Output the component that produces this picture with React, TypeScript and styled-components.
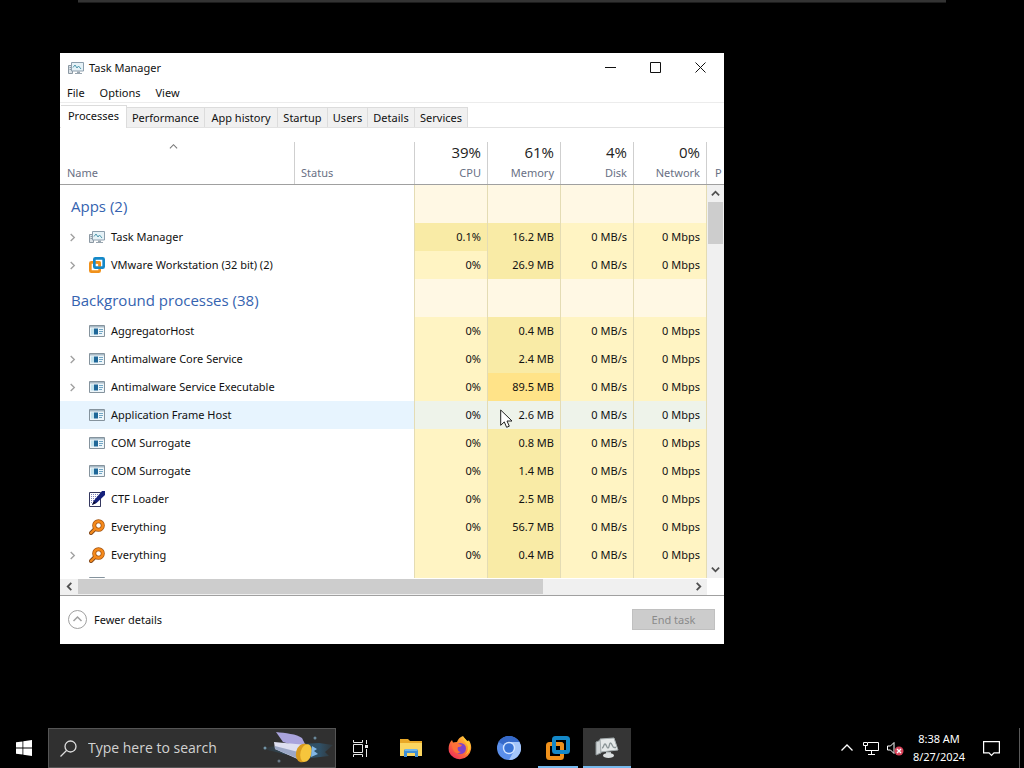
import React from "react";
import styled, { createGlobalStyle, css } from "styled-components";

const displayFont = `"Open Sans", "Noto Sans", sans-serif`;

const GlobalStyle = createGlobalStyle`
  * { box-sizing: border-box; }
  body {
    margin: 0;
    background: #000;
    color: #111;
    font-family: "Noto Sans", "Open Sans", sans-serif;
    font-size: 11px;
    line-height: 16px;
  }
  button, input { font: inherit; color: inherit; }
  button { background: none; border: 0; padding: 0; }
  svg { display: block; flex: none; }
`;

const Desktop = styled.div`
  display: flex;
  flex-direction: column;
  height: 100vh;
  min-height: 480px;
  overflow: hidden;
`;

const SessionHandle = styled.div`
  height: 3px;
  margin: 0 78px;
  background: #333;
  border-bottom: 1px solid #1c1c1c;
`;

const Workspace = styled.main`
  display: flex;
  flex: 1;
  min-height: 0;
  padding: 50px 300px 84px 60px;
`;

const AppWindow = styled.section`
  display: flex;
  flex: 1;
  flex-direction: column;
  min-width: 0;
  background: #fff;
`;

const TitleBar = styled.header`
  display: flex;
  align-items: center;
  height: 29px;
  padding: 0 1px 0 8px;
`;

const Title = styled.h1`
  flex: 1;
  margin: 0 0 0 5px;
  font-size: 11px;
  font-weight: 400;
`;

const CaptionButton = styled.button`
  display: grid;
  place-items: center;
  width: 45px;
  height: 29px;
`;

const MenuBar = styled.nav`
  display: flex;
  gap: 15px;
  height: 21px;
  padding: 3px 7px 0;
  border-bottom: 1px solid #ececec;
`;

const MenuButton = styled.button`
  height: 16px;
`;

const TabStrip = styled.div`
  display: flex;
  align-items: flex-end;
  height: 25px;
  padding-left: 1px;
  border-bottom: 1px solid #e2e2e2;
`;

const Tab = styled.button<{ $width: number; $active?: boolean }>`
  width: ${(p) => p.$width}px;
  height: 20px;
  background: #f0f0f0;
  border: 1px solid #dcdcdc;
  border-width: 1px 1px 0 0;
  white-space: nowrap;
  ${(p) =>
    p.$active &&
    css`
      height: 23px;
      padding-bottom: 2px;
      margin-bottom: -1px;
      background: #fff;
    `}
`;

const ListArea = styled.div`
  position: relative;
  flex: 1;
  min-height: 0;
  overflow: hidden;
`;

const ProcessTable = styled.table`
  width: 100%;
  table-layout: fixed;
  border-collapse: separate;
  border-spacing: 0;
`;

const HeadCell = styled.th<{ $width?: number; $align?: "right" }>`
  width: ${(p) => (p.$width ? `${p.$width}px` : "auto")};
  height: 57px;
  padding: 14px 0 0;
  border-bottom: 1px solid #a0a0a0;
  color: #697084;
  font-weight: 400;
  text-align: ${(p) => p.$align || "left"};
  vertical-align: top;
`;

const HeadContent = styled.div<{ $divider?: boolean; $edge?: boolean }>`
  display: flex;
  flex-direction: column;
  justify-content: flex-end;
  height: 42px;
  padding: ${(p) => (p.$edge ? "0 0 3px 8px" : "0 6px 3px")};
  border-left: 1px solid ${(p) => (p.$divider ? "#cfcfcf" : "transparent")};
  white-space: nowrap;
`;

const SortMark = styled.span`
  display: flex;
  justify-content: center;
  height: 23px;
  margin-right: 8px;
`;

const Usage = styled.span`
  margin-bottom: 3px;
  color: #222;
  font-family: ${displayFont};
  font-size: 15px;
  line-height: 20px;
`;

const heat = {
  group: "#fff8e4",
  low: "#fff4c3",
  mid: "#f9eba6",
  high: "#ffe388",
  hover: "#eef3ea",
};
type Heat = keyof typeof heat;

const GroupTitle = styled.th`
  height: 38px;
  padding: 3px 0 0 11px;
  color: #3563b0;
  font-family: ${displayFont};
  font-size: 15px;
  font-weight: 400;
  line-height: 20px;
  text-align: left;
`;

const Row = styled.tr<{ $hover?: boolean }>`
  height: 28px;
  background: ${(p) => (p.$hover ? "#e7f4fe" : "#fff")};
`;

const Cell = styled.td`
  padding: 0;
`;

const NumberCell = styled.td<{ $heat: Heat }>`
  padding: 0 6px 0 0;
  background: ${(p) => heat[p.$heat]};
  border-left: 1px solid #e4dcb4;
  text-align: right;
  white-space: nowrap;
`;

const EdgeCell = styled.td`
  padding: 0;
  border-left: 1px solid #e4dcb4;
`;

const NameLine = styled.div`
  display: flex;
  align-items: center;
  gap: 6px;
  padding-left: 8px;
  white-space: nowrap;
`;

const ExpandSlot = styled.span`
  flex: none;
  width: 9px;
  margin-right: 6px;
`;

const ExpandButton = styled.button`
  display: grid;
  place-items: center;
  width: 9px;
  height: 16px;
`;

const VerticalScroll = styled.div`
  position: absolute;
  top: 57px;
  right: 0;
  bottom: 0;
  display: flex;
  flex-direction: column;
  width: 17px;
  background: #f0f0f0;
`;

const HorizontalScroll = styled.div`
  display: flex;
  height: 17px;
  margin-right: 17px;
  padding: 0 0 1px 1px;
  background: #f0f0f0;
  border-top: 1px solid #fff;
`;

const ScrollButton = styled.button`
  display: grid;
  flex: none;
  place-items: center;
  width: 17px;
  height: 17px;
`;

const SideScrollButton = styled(ScrollButton)`
  height: 15px;
`;

const VerticalThumb = styled.div`
  width: 15px;
  height: 42px;
  margin: 0 1px;
  background: #cdcdcd;
`;

const Track = styled.div`
  flex: 1;
`;

const HorizontalThumb = styled.div`
  width: 76%;
  height: 15px;
  background: #cdcdcd;
`;

const Footer = styled.footer`
  display: flex;
  align-items: center;
  justify-content: space-between;
  height: 49px;
  padding: 0 9px 1px 7px;
  border-top: 1px solid #a0a0a0;
`;

const DetailsButton = styled.button`
  display: flex;
  align-items: center;
  gap: 6px;
`;

const EndTaskButton = styled.button`
  width: 83px;
  height: 21px;
  background: #ccc;
  border: 1px solid #c0c0c0;
  color: #8a8a8a;
`;

const Taskbar = styled.footer`
  display: flex;
  flex: none;
  height: 40px;
  color: #fff;
`;

const TaskButton = styled.button<{ $running?: boolean; $active?: boolean }>`
  display: grid;
  place-items: center;
  width: 48px;
  height: 40px;
  background: ${(p) => (p.$active ? "#353535" : "transparent")};
  ${(p) =>
    p.$running &&
    css`
      background-image: linear-gradient(#76b9ed, #76b9ed);
      background-position: bottom;
      background-repeat: no-repeat;
      background-size: ${p.$active ? "48px" : "40px"} 2px;
    `}
`;

const SearchBox = styled.label`
  display: flex;
  align-items: center;
  flex: 0 1 288px;
  min-width: 0;
  height: 40px;
  padding-left: 11px;
  background: #303030;
  border: 1px solid #555;
`;

const SearchInput = styled.input`
  flex: 1;
  min-width: 0;
  margin-left: 11px;
  padding: 0;
  background: none;
  border: 0;
  outline: 0;
  font-family: ${displayFont};
  font-size: 14px;
  line-height: 20px;
  &::placeholder { color: #d2d2d2; opacity: 1; }
`;

const Pinned = styled.div`
  display: flex;
  flex: 1;
  gap: 1px;
  margin-left: 3px;
`;

const Tray = styled.div`
  display: flex;
  align-items: center;
  margin-right: 4px;
  padding-right: 8px;
  border-right: 1px solid #5a5a5a;
`;

const TrayButton = styled.button<{ $width: number }>`
  display: grid;
  place-items: center;
  width: ${(p) => p.$width}px;
  height: 40px;
`;

const Clock = styled.time`
  width: 64px;
  line-height: 18px;
  text-align: center;
`;

const Pointer = styled.svg`
  position: absolute;
  left: 440px;
  top: 281px;
`;

function Chevron({ dir, size = 9, color = "#505050", stroke = 2 }: { dir: "up" | "down" | "left" | "right"; size?: number; color?: string; stroke?: number }) {
  const paths = {
    up: "M1 7 5 3l4 4",
    down: "M1 3l4 4 4-4",
    left: "M7 1 3 5l4 4",
    right: "M3 1l4 4-4 4",
  };
  return (
    <svg width={size} height={size} viewBox="0 0 10 10" fill="none" stroke={color} strokeWidth={stroke} aria-hidden="true">
      <path d={paths[dir]} />
    </svg>
  );
}

function MonitorIcon() {
  return (
    <svg width="16" height="16" viewBox="0 0 16 16" aria-hidden="true">
      <path d="M.5 5.500h4v8h-4z" fill="#dce3e8" stroke="#8b98a3" />
      <path d="M1.500 7.500h2M1.500 9.500h2" stroke="#8b98a3" />
      <path d="M3.500 2.500h12v8.500h-12z" fill="#e6f2f7" stroke="#8d9fad" />
      <path d="M5 7.500 7 5l2 3 1.500-2L13 9" fill="none" stroke="#4f99ae" />
      <path d="M9 11.500h3v2H9zM7 13h7v1H7z" fill="#99a6b0" />
    </svg>
  );
}

function VmwareIcon({ size = 16 }: { size?: number }) {
  return (
    <svg width={size} height={size} viewBox="0 0 24 24" fill="none" strokeWidth="4" aria-hidden="true">
      <rect x="2" y="8" width="14" height="14" rx="1.500" stroke="#f0911b" />
      <rect x="8" y="2" width="14" height="14" rx="1.500" stroke="#1488c8" />
      <path d="M11 8h3.500A1.500 1.500 0 0 1 16 9.500V14" stroke="#f0911b" />
    </svg>
  );
}

function GenericIcon() {
  return (
    <svg width="16" height="16" viewBox="0 0 16 16" aria-hidden="true">
      <path d="M.5 2.500h15v11H.500z" fill="#eef6fa" stroke="#85939d" />
      <path d="M1 3h14v1.500H1z" fill="#a8bac6" />
      <path d="M2 5.500h3v6H2z" fill="#c3e3ee" />
      <path d="M5 5.500h4v6H5z" fill="#1e6798" />
      <path d="M10 6.500h4M10 8.500h4M10 10.500h3" stroke="#73a6c4" />
    </svg>
  );
}

function CtfIcon() {
  return (
    <svg width="16" height="16" viewBox="0 0 16 16" aria-hidden="true">
      <path d="M.5 1.500h11v14H.500z" fill="#fff" stroke="#35385f" />
      <path d="M2 3.500h8M2 5.500h8M2 7.500h6M2 9.500h4M2 11.500h3" stroke="#7d82bb" strokeDasharray="1 1" />
      <path d="M13 0h3v4L7.500 12 3 14l2-4.500z" fill="#15207b" />
      <path d="m5 10 2 2-4 2z" fill="#0b0d30" />
      <path d="M11.500 8v7.500" stroke="#35385f" />
    </svg>
  );
}

function EverythingIcon() {
  return (
    <svg width="16" height="16" viewBox="0 0 16 16" fill="none" aria-hidden="true">
      <path d="M6.500 9.500 2 14" stroke="#81471a" strokeWidth="4" strokeLinecap="round" />
      <circle cx="9.500" cy="6.500" r="4.300" stroke="#a4540f" strokeWidth="4" />
      <circle cx="9.500" cy="6.500" r="4.300" stroke="#f58a1c" strokeWidth="2.500" />
      <path d="M6.500 9.500 2 14" stroke="#f58a1c" strokeWidth="2.300" strokeLinecap="round" />
    </svg>
  );
}

function FolderIcon() {
  return (
    <svg width="22" height="20" viewBox="0 0 22 20" aria-hidden="true">
      <path d="M0 1h8l2 2h12v15H0z" fill="#e9a928" />
      <path d="M0 5h22v13H0z" fill="#fbd660" />
      <path d="M4 13a2 2 0 0 1 2-2h10a2 2 0 0 1 2 2v6h-3v-4H7v4H4z" fill="#3f8fd6" />
      <path d="M5 11h12v2H5z" fill="#71b6e8" />
    </svg>
  );
}

function FirefoxIcon() {
  return (
    <svg width="24" height="24" viewBox="0 0 24 24" aria-hidden="true">
      <defs>
        <linearGradient id="fox" x1="1" y1="0" x2="0.200" y2="1">
          <stop offset="0" stopColor="#ffe74d" />
          <stop offset="0.450" stopColor="#ff8b2b" />
          <stop offset="1" stopColor="#f22a5c" />
        </linearGradient>
      </defs>
      <path d="M15 0c1 2 3 3 4 5l2-.500c2 3 2.500 6 2 9A11.500 11.500 0 0 1 1 16C0 11 1 7 4 4l1 2.500 4-.500c1-3 3-5 6-6z" fill="url(#fox)" />
      <circle cx="12.500" cy="12.500" r="5.500" fill="#8044c8" />
      <path d="M4 8c3-2 5-1.500 7 0l3 1c-1 2-3 2-4 2-1 2 0 5 3 5-4 3-9 0-9-8z" fill="#ff7138" />
      <path d="M15 1c0 4 4 5 5 10 0 4-1 6-3 8 6-3 6-9 4-13l-2-1z" fill="#ffc931" />
    </svg>
  );
}

function ChromiumIcon() {
  return (
    <svg width="24" height="24" viewBox="0 0 24 24" aria-hidden="true">
      <circle cx="12" cy="12" r="12" fill="#5b8fea" />
      <path d="M12 12 1.600 6A12 12 0 0 1 22.400 6H12z" fill="#3569c9" />
      <path d="M12 6h10.400A12 12 0 0 1 12 24l5-9z" fill="#a5c6fa" />
      <circle cx="12" cy="12" r="6.200" fill="#d3e4ff" />
      <circle cx="12" cy="12" r="4.800" fill="#3973d5" />
    </svg>
  );
}

function TaskbarMonitorIcon() {
  return (
    <svg width="24" height="24" viewBox="0 0 24 24" aria-hidden="true">
      <path d="m1 6 5-2v13l-5 2z" fill="#cfd4d6" stroke="#8d9698" />
      <path d="m5 3 14-1 4 12-17 2z" fill="#e4e8e8" stroke="#a3abad" />
      <path d="M7 12c2 0 1.500-4 3-4s1.500 4 3 4 1-5 2.500-5 2 4.500 3.500 4.500h2" fill="none" stroke="#8a9496" strokeWidth="1.300" />
      <path d="M11 16h5v3h-5z" fill="#b9c0c2" />
      <ellipse cx="13.500" cy="19.500" rx="5.500" ry="2.500" fill="#dce0e1" />
    </svg>
  );
}

function SatelliteArt() {
  return (
    <svg width="72" height="38" viewBox="0 0 72 38" aria-hidden="true">
      <defs>
        <linearGradient id="glow">
          <stop offset="0" stopColor="#31566d" stopOpacity="0.100" />
          <stop offset="0.300" stopColor="#31566d" stopOpacity="0.700" />
          <stop offset="0.800" stopColor="#2f5f80" stopOpacity="0.700" />
          <stop offset="1" stopColor="#31566d" stopOpacity="0.200" />
        </linearGradient>
      </defs>
      <path d="M2 20c8-5 14 0 20-4l34-2 14 2-8 7 4 4-18 2-28-4C13 22 9 23 2 20z" fill="url(#glow)" />
      <path d="M13 3c9 1 21 2 26 6l3 6-9 2-13-4z" fill="#a9a3dc" />
      <path d="m11 13 33 3-5 16-27-12z" fill="#dedff0" />
      <path d="m12 17 27 7-1 7-26-11z" fill="#9ca7c6" />
      <ellipse cx="40" cy="24" rx="7" ry="9.500" transform="rotate(15 40 24)" fill="#d89a1e" />
      <ellipse cx="43" cy="24" rx="5.500" ry="9" transform="rotate(15 43 24)" fill="#f6c53c" />
      <path d="m49 17 5 3-3 2 4 3-7 3z" fill="#83b7e6" />
      <circle cx="52" cy="9" r="1.500" fill="#6a899c" />
      <circle cx="16" cy="32" r="1.500" fill="#697987" />
      <circle cx="2" cy="19" r="1.500" fill="#7194a7" />
    </svg>
  );
}

type Process = {
  name: string;
  icon: React.ReactNode;
  memory: string;
  cpu?: string;
  expandable?: boolean;
  cpuHeat?: Heat;
  memoryHeat?: Heat;
  hover?: boolean;
};

const groups: { title: string; items: Process[] }[] = [
  {
    title: "Apps (2)",
    items: [
      { name: "Task Manager", icon: <MonitorIcon />, cpu: "0.1%", cpuHeat: "mid", memory: "16.2 MB", expandable: true },
      { name: "VMware Workstation (32 bit) (2)", icon: <VmwareIcon />, memory: "26.9 MB", expandable: true },
    ],
  },
  {
    title: "Background processes (38)",
    items: [
      { name: "AggregatorHost", icon: <GenericIcon />, memory: "0.4 MB" },
      { name: "Antimalware Core Service", icon: <GenericIcon />, memory: "2.4 MB", expandable: true },
      { name: "Antimalware Service Executable", icon: <GenericIcon />, memory: "89.5 MB", memoryHeat: "high", expandable: true },
      { name: "Application Frame Host", icon: <GenericIcon />, memory: "2.6 MB", hover: true },
      { name: "COM Surrogate", icon: <GenericIcon />, memory: "0.8 MB" },
      { name: "COM Surrogate", icon: <GenericIcon />, memory: "1.4 MB" },
      { name: "CTF Loader", icon: <CtfIcon />, memory: "2.5 MB" },
      { name: "Everything", icon: <EverythingIcon />, memory: "56.7 MB" },
      { name: "Everything", icon: <EverythingIcon />, memory: "0.4 MB", expandable: true },
      { name: "", icon: <GenericIcon />, cpu: "", memory: "" },
    ],
  },
];

const tabs = [
  { label: "Processes", width: 66 },
  { label: "Performance", width: 78 },
  { label: "App history", width: 73 },
  { label: "Startup", width: 50 },
  { label: "Users", width: 40 },
  { label: "Details", width: 47 },
  { label: "Services", width: 53 },
];

const usage = [
  { label: "CPU", value: "39%" },
  { label: "Memory", value: "61%" },
  { label: "Disk", value: "4%" },
  { label: "Network", value: "0%" },
];

function ProcessRow({ item }: { item: Process }) {
  const shade = (base: Heat): Heat => (item.hover ? "hover" : base);
  return (
    <Row $hover={item.hover}>
      <Cell colSpan={2}>
        <NameLine>
          <ExpandSlot>
            {item.expandable && (
              <ExpandButton aria-label={`Expand ${item.name}`}>
                <Chevron dir="right" color="#a0a0a0" stroke={1.5} />
              </ExpandButton>
            )}
          </ExpandSlot>
          {item.icon}
          <span>{item.name}</span>
        </NameLine>
      </Cell>
      <NumberCell $heat={shade(item.cpuHeat || "low")}>{item.cpu ?? "0%"}</NumberCell>
      <NumberCell $heat={shade(item.memoryHeat || "mid")}>{item.memory}</NumberCell>
      <NumberCell $heat={shade("low")}>{item.name && "0 MB/s"}</NumberCell>
      <NumberCell $heat={shade("low")}>{item.name && "0 Mbps"}</NumberCell>
      <EdgeCell />
    </Row>
  );
}

export default function App() {
  return (
    <Desktop>
      <GlobalStyle />
      <SessionHandle />
      <Workspace>
        <AppWindow>
          <TitleBar>
            <MonitorIcon />
            <Title>Task Manager</Title>
            <CaptionButton aria-label="Minimize">
              <svg width="11" height="11" stroke="#111"><path d="M0 5.500h11" /></svg>
            </CaptionButton>
            <CaptionButton aria-label="Maximize">
              <svg width="11" height="11" stroke="#111" fill="none"><path d="M.5 .5h10v10H.5z" /></svg>
            </CaptionButton>
            <CaptionButton aria-label="Close">
              <svg width="11" height="11" stroke="#111"><path d="m.5 .5 10 10m0-10-10 10" /></svg>
            </CaptionButton>
          </TitleBar>
          <MenuBar>
            <MenuButton>File</MenuButton>
            <MenuButton>Options</MenuButton>
            <MenuButton>View</MenuButton>
          </MenuBar>
          <TabStrip role="tablist">
            {tabs.map((t, i) => (
              <Tab key={t.label} role="tab" aria-selected={i === 0} $width={t.width} $active={i === 0}>
                {t.label}
              </Tab>
            ))}
          </TabStrip>
          <ListArea>
            <ProcessTable>
              <thead>
                <tr>
                  <HeadCell>
                    <HeadContent>
                      <SortMark><Chevron dir="up" color="#777" stroke={1.2} /></SortMark>
                      <span>Name</span>
                    </HeadContent>
                  </HeadCell>
                  <HeadCell $width={120}><HeadContent $divider>Status</HeadContent></HeadCell>
                  {usage.map((u) => (
                    <HeadCell key={u.label} $width={73} $align="right">
                      <HeadContent $divider>
                        <Usage>{u.value}</Usage>
                        <span>{u.label}</span>
                      </HeadContent>
                    </HeadCell>
                  ))}
                  <HeadCell $width={18} aria-label="Power usage"><HeadContent $divider $edge>P</HeadContent></HeadCell>
                </tr>
              </thead>
              <tbody>
                {groups.map((g) => (
                  <React.Fragment key={g.title}>
                    <tr>
                      <GroupTitle colSpan={2} scope="rowgroup">{g.title}</GroupTitle>
                      {usage.map((u) => <NumberCell key={u.label} $heat="group" />)}
                      <EdgeCell />
                    </tr>
                    {g.items.map((item, i) => <ProcessRow key={i} item={item} />)}
                  </React.Fragment>
                ))}
              </tbody>
            </ProcessTable>
            <VerticalScroll>
              <ScrollButton aria-label="Scroll up"><Chevron dir="up" /></ScrollButton>
              <VerticalThumb />
              <Track />
              <ScrollButton aria-label="Scroll down"><Chevron dir="down" /></ScrollButton>
            </VerticalScroll>
            <Pointer width="13" height="20" viewBox="0 0 13 20" aria-hidden="true">
              <path d="M.7 1v15.300l3.600-3.400 2.300 5.400 2.700-1.100L7 12h5z" fill="#fff" stroke="#222" />
            </Pointer>
          </ListArea>
          <HorizontalScroll>
            <SideScrollButton aria-label="Scroll left"><Chevron dir="left" /></SideScrollButton>
            <Track><HorizontalThumb /></Track>
            <SideScrollButton aria-label="Scroll right"><Chevron dir="right" /></SideScrollButton>
          </HorizontalScroll>
          <Footer>
            <DetailsButton>
              <svg width="21" height="21" fill="none" stroke="#a0a0a0" aria-hidden="true">
                <circle cx="10.500" cy="10.500" r="9" />
                <path d="m6.500 12 4-4 4 4" strokeWidth="1.500" />
              </svg>
              Fewer details
            </DetailsButton>
            <EndTaskButton disabled>End task</EndTaskButton>
          </Footer>
        </AppWindow>
      </Workspace>
      <Taskbar>
        <TaskButton aria-label="Start">
          <svg width="16" height="16" fill="#fff">
            <path d="M0 2.300 6.500 1.400v6.200H0zM7.300 1.300 16 0v7.600H7.300zM0 8.400h6.500v6.200L0 13.700zM7.300 8.400H16V16l-8.700-1.300z" />
          </svg>
        </TaskButton>
        <SearchBox>
          <svg width="17" height="17" fill="none" stroke="#ddd" strokeWidth="1.300" aria-hidden="true">
            <circle cx="10.500" cy="6.500" r="5.500" />
            <path d="M6.500 10.500.5 16.500" />
          </svg>
          <SearchInput type="text" placeholder="Type here to search" aria-label="Search" />
          <SatelliteArt />
        </SearchBox>
        <TaskButton aria-label="Task view">
          <svg width="18" height="17" fill="none" stroke="#e8e8e8" aria-hidden="true">
            <path d="M2.500 4.500h9v8h-9zM2.500 0v2.500h9V0M2.500 17v-2.500h9V17M15.500 0v4M15.500 9v8" />
            <path d="M14 5h3v3h-3z" fill="#e8e8e8" stroke="none" />
          </svg>
        </TaskButton>
        <Pinned>
          <TaskButton aria-label="File Explorer"><FolderIcon /></TaskButton>
          <TaskButton aria-label="Firefox"><FirefoxIcon /></TaskButton>
          <TaskButton aria-label="Chromium"><ChromiumIcon /></TaskButton>
          <TaskButton aria-label="VMware Workstation" $running><VmwareIcon size={24} /></TaskButton>
          <TaskButton aria-label="Task Manager" $running $active><TaskbarMonitorIcon /></TaskButton>
        </Pinned>
        <Tray>
          <TrayButton $width={24} aria-label="Show hidden icons">
            <svg width="12" height="8" fill="none" stroke="#fff" strokeWidth="1.300"><path d="m.5 6.500 5.500-5.500 5.500 5.500" /></svg>
          </TrayButton>
          <TrayButton $width={24} aria-label="Network">
            <svg width="16" height="14" fill="none" stroke="#fff">
              <path d="M5 1.500h10.500v8H2.500V5M8.500 10v3M5 13.500h7" />
              <path d="M.5 1.500h4v3h-4z" />
            </svg>
          </TrayButton>
          <TrayButton $width={24} aria-label="Volume muted">
            <svg width="17" height="15" fill="none">
              <path d="M.5 5h3L7 1.500v11L3.500 9h-3z" stroke="#fff" />
              <circle cx="12" cy="10" r="4.500" fill="#d9435a" />
              <path d="m10 8 4 4m0-4-4 4" stroke="#fff" strokeWidth="1.400" />
            </svg>
          </TrayButton>
          <Clock>8:38 AM<br />8/27/2024</Clock>
          <TrayButton $width={40} aria-label="Notifications">
            <svg width="17" height="17" fill="none" stroke="#fff" strokeWidth="1.200"><path d="M.6 1.600h15.800v11.300H11l-2.500 2.600L6 12.900H.6z" /></svg>
          </TrayButton>
        </Tray>
      </Taskbar>
    </Desktop>
  );
}
